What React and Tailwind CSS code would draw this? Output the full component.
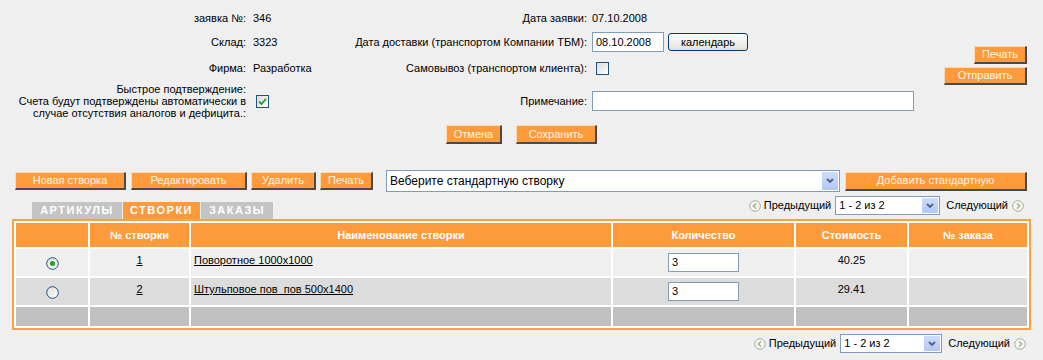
import React from 'react';

const font = { fontFamily: '"Liberation Sans", Arial, sans-serif' };

const OrangeButton = ({ children, className = '' }) => (
  <button
    className={`flex items-center justify-center bg-[#fd9a3c] text-[#fff6ea] text-[11px] leading-none border-t border-l border-t-[#ffd9b0] border-l-[#ffd9b0] border-r-2 border-b-2 border-r-[#4a4a4a] border-b-[#4a4a4a] ${className}`}
  >
    {children}
  </button>
);

const XpCheckbox = ({ checked }) => (
  <span className="w-[13px] h-[13px] border border-[#1c5180] bg-gradient-to-br from-[#dcdcd7] to-[#ffffff] flex items-center justify-center">
    {checked && (
      <svg width="9" height="9" viewBox="0 0 9 9">
        <path d="M1 4.5 L3.5 7 L8 1.8" fill="none" stroke="#21a121" strokeWidth="1.8" />
      </svg>
    )}
  </span>
);

const XpRadio = ({ checked }) => (
  <svg width="13" height="13" viewBox="0 0 13 13" className="inline-block">
    <defs>
      <linearGradient id="rg" x1="0" y1="0" x2="1" y2="1">
        <stop offset="0" stopColor="#dcdcd7" />
        <stop offset="1" stopColor="#ffffff" />
      </linearGradient>
    </defs>
    <circle cx="6.5" cy="6.5" r="5.8" fill="url(#rg)" stroke="#1c5180" strokeWidth="1" />
    {checked && <circle cx="6.5" cy="6.5" r="2.5" fill="#21a121" />}
  </svg>
);

const XpSelect = ({ value, className = '', arrowH = 'h-[16px]' }) => (
  <div className={`flex items-center bg-white border border-[#7f9db9] ${className}`}>
    <span className="flex-1 pl-[3px] text-black truncate">{value}</span>
    <span className={`w-[16px] ${arrowH} mr-[1px] bg-gradient-to-b from-[#cfdcfd] to-[#b3c7f5] rounded-[1px] flex items-center justify-center`}>
      <svg width="8" height="6" viewBox="0 0 8 6">
        <path d="M1 1 L4 4 L7 1" fill="none" stroke="#4d6185" strokeWidth="1.8" />
      </svg>
    </span>
  </div>
);

// small round prev/next arrows next to the pager
const NavIcon = ({ dir }) => (
  <svg width="12" height="12" viewBox="0 0 12 12">
    <circle cx="6" cy="6" r="5.3" fill="#f4f6f0" stroke="#a3b39a" strokeWidth="1" />
    <path
      d={dir === 'prev' ? 'M7 3.3 L4.3 6 L7 8.7' : 'M5 3.3 L7.7 6 L5 8.7'}
      fill="none"
      stroke="#94a78c"
      strokeWidth="1.2"
    />
  </svg>
);

const Pager = ({ selectW }) => (
  <div className="flex items-center text-[11px] text-black">
    <NavIcon dir="prev" />
    <span className="ml-[3px]">Предыдущий</span>
    <XpSelect value="1 - 2 из 2" className={`${selectW} h-[19px] ml-[4px] text-[11px]`} arrowH="h-[15px]" />
    <span className="ml-[6px]">Следующий</span>
    <span className="ml-[4px]"><NavIcon dir="next" /></span>
  </div>
);

const rows = [
  { n: '1', name: 'Поворотное 1000х1000', qty: '3', price: '40.25', checked: true, bg: 'bg-[#efefef]' },
  { n: '2', name: 'Штульповое пов  пов 500х1400', qty: '3', price: '29.41', checked: false, bg: 'bg-[#dcdcdc]' },
];

export default function App() {
  return (
    <div className="w-[1043px] h-[360px] bg-[#efefef] text-[11px] text-black overflow-hidden" style={font}>
      {/* Order header */}
      <div className="grid grid-cols-[246px_95px_246px_1fr_auto] pt-[8px] pr-[16px]">
        <div className="h-[21px] flex items-center justify-end whitespace-nowrap">заявка №:</div>
        <div className="h-[21px] flex items-center pl-[7px]">346</div>
        <div className="h-[21px] flex items-center justify-end whitespace-nowrap">Дата заявки:</div>
        <div className="h-[21px] flex items-center pl-[5px]">07.10.2008</div>
        <div className="col-start-5 row-start-1 row-span-4 flex flex-col items-end pt-[38px] gap-[3px]">
          <OrangeButton className="w-[53px] h-[18px]">Печать</OrangeButton>
          <OrangeButton className="w-[83px] h-[18px]">Отправить</OrangeButton>
        </div>

        <div className="h-[26px] flex items-center justify-end whitespace-nowrap">Склад:</div>
        <div className="h-[26px] flex items-center pl-[7px]">3323</div>
        <div className="h-[26px] flex items-center justify-end whitespace-nowrap">Дата доставки (транспортом Компании ТБМ):</div>
        <div className="h-[26px] flex items-center pl-[5px]">
          <div className="w-[72px] h-[20px] bg-white border border-[#7f9db9] flex items-center pl-[3px]">08.10.2008</div>
          <button className="ml-[4px] w-[80px] h-[18px] rounded-[3px] border border-[#003c74] bg-gradient-to-b from-[#ffffff] to-[#e3e1d6] text-[11px] text-black leading-none">
            календарь
          </button>
        </div>

        <div className="h-[26px] flex items-center justify-end whitespace-nowrap">Фирма:</div>
        <div className="h-[26px] flex items-center pl-[7px]">Разработка</div>
        <div className="h-[26px] flex items-center justify-end whitespace-nowrap">Самовывоз (транспортом клиента):</div>
        <div className="h-[26px] flex items-center pl-[9px]">
          <XpCheckbox />
        </div>

        <div className="h-[40px] flex flex-col items-end justify-center text-right leading-[12px] whitespace-nowrap">
          <span>Быстрое подтверждение:</span>
          <span>Счета будут подтверждены автоматически в</span>
          <span>случае отсутствия аналогов и дефицита.:</span>
        </div>
        <div className="h-[40px] flex items-center pl-[10px]">
          <XpCheckbox checked />
        </div>
        <div className="h-[40px] flex items-center justify-end whitespace-nowrap">Примечание:</div>
        <div className="h-[40px] flex items-center pl-[5px]">
          <div className="w-[322px] h-[20px] bg-white border border-[#7f9db9]" />
        </div>

        <div className="col-span-5 flex justify-center gap-[14px] pt-[4px] pl-[16px]">
          <OrangeButton className="w-[56px] h-[19px]">Отмена</OrangeButton>
          <OrangeButton className="w-[81px] h-[19px]">Сохранить</OrangeButton>
        </div>
      </div>

      {/* Toolbar */}
      <div className="mt-[26px] h-[22px] flex items-center pl-[15px] pr-[16px]">
        <OrangeButton className="w-[111px] h-[18px]">Новая створка</OrangeButton>
        <OrangeButton className="w-[116px] h-[18px] ml-[5px]">Редактировать</OrangeButton>
        <OrangeButton className="w-[65px] h-[18px] ml-[4px]">Удалить</OrangeButton>
        <OrangeButton className="w-[53px] h-[18px] ml-[4px]">Печать</OrangeButton>
        <XpSelect value="Веберите стандартную створку" className="w-[454px] h-[22px] ml-[13px] text-[12px]" arrowH="h-[18px]" />
        <OrangeButton className="w-[182px] h-[19px] ml-[5px]">Добавить стандартную</OrangeButton>
      </div>

      {/* Tabs + pager */}
      <div className="h-[27px] flex justify-between pl-[32px] pr-[19px]">
        <div className="self-end flex h-[17px] text-[11px] font-bold tracking-[1.5px] text-white">
          <span className="w-[90px] bg-[#c4c4c4] flex items-center justify-center">АРТИКУЛЫ</span>
          <span className="w-[77px] ml-[1px] bg-[#fd9a3c] flex items-center justify-center">СТВОРКИ</span>
          <span className="w-[72px] ml-[1px] bg-[#c4c4c4] flex items-center justify-center">ЗАКАЗЫ</span>
        </div>
        <div className="self-start mt-[4px]">
          <Pager selectW="w-[105px]" />
        </div>
      </div>

      {/* Table */}
      <div className="mx-[12px]">
        <table className="w-full table-fixed border-separate border-spacing-[2px] border-2 border-[#f6a443] bg-white">
          <colgroup>
            <col className="w-[72px]" />
            <col className="w-[99px]" />
            <col className="w-[420px]" />
            <col className="w-[181px]" />
            <col className="w-[111px]" />
            <col />
          </colgroup>
          <thead>
            <tr className="h-[24px] text-white font-bold text-[11px]">
              <th className="bg-[#fd9a3c]"></th>
              <th className="bg-[#fd9a3c]">№ створки</th>
              <th className="bg-[#fd9a3c]">Наименование створки</th>
              <th className="bg-[#fd9a3c]">Количество</th>
              <th className="bg-[#fd9a3c]">Стоимость</th>
              <th className="bg-[#fd9a3c]">№ заказа</th>
            </tr>
          </thead>
          <tbody>
            {rows.map((r) => (
              <tr key={r.n} className="h-[27px] align-top">
                <td className={`${r.bg} text-center pt-[5px] p-0`}>
                  <XpRadio checked={r.checked} />
                </td>
                <td className={`${r.bg} text-center pt-[3px]`}>
                  <span className="underline">{r.n}</span>
                </td>
                <td className={`${r.bg} pl-[3px] pt-[3px]`}>
                  <span className="underline whitespace-pre">{r.name}</span>
                </td>
                <td className={`${r.bg} pt-[4px]`}>
                  <div className="mx-auto w-[71px] h-[19px] bg-white border border-[#7f9db9] flex items-center pl-[3px]">
                    {r.qty}
                  </div>
                </td>
                <td className={`${r.bg} text-center pt-[3px]`}>{r.price}</td>
                <td className={r.bg}></td>
              </tr>
            ))}
            <tr className="h-[19px]">
              <td className="bg-[#c0c0c0]"></td>
              <td className="bg-[#c0c0c0]"></td>
              <td className="bg-[#c0c0c0]"></td>
              <td className="bg-[#c0c0c0]"></td>
              <td className="bg-[#c0c0c0]"></td>
              <td className="bg-[#c0c0c0]"></td>
            </tr>
          </tbody>
        </table>
      </div>

      {/* Bottom pager */}
      <div className="mt-[4px] flex justify-end pr-[17px]">
        <Pager selectW="w-[102px]" />
      </div>
    </div>
  );
}
